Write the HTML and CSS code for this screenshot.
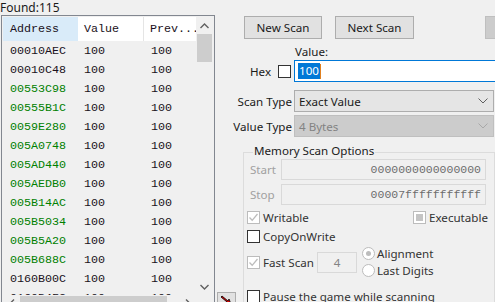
FILE: index.html
```html
<!DOCTYPE html>
<html>
<head>
<meta charset="utf-8">
<title>Cheat Engine</title>
<link rel="stylesheet" href="styles.css">
</head>
<body>
<div class="app">
  <div class="left">
    <div class="found">Found:115</div>
    <div class="list">
      <div class="table">
        <div class="hdr">
          <div class="c1 hot">Address</div>
          <div class="c2">Value</div>
          <div class="c3">Prev...</div>
        </div>
        <div class="row"><span class="c1">00010AEC</span><span class="c2">100</span><span class="c3">100</span></div>
        <div class="row"><span class="c1">00010C48</span><span class="c2">100</span><span class="c3">100</span></div>
        <div class="row"><span class="c1 g">00553C98</span><span class="c2">100</span><span class="c3">100</span></div>
        <div class="row"><span class="c1 g">00555B1C</span><span class="c2">100</span><span class="c3">100</span></div>
        <div class="row"><span class="c1 g">0059E280</span><span class="c2">100</span><span class="c3">100</span></div>
        <div class="row"><span class="c1 g">005A0748</span><span class="c2">100</span><span class="c3">100</span></div>
        <div class="row"><span class="c1 g">005AD440</span><span class="c2">100</span><span class="c3">100</span></div>
        <div class="row"><span class="c1 g">005AEDB0</span><span class="c2">100</span><span class="c3">100</span></div>
        <div class="row"><span class="c1 g">005B14AC</span><span class="c2">100</span><span class="c3">100</span></div>
        <div class="row"><span class="c1 g">005B5034</span><span class="c2">100</span><span class="c3">100</span></div>
        <div class="row"><span class="c1 g">005B5A20</span><span class="c2">100</span><span class="c3">100</span></div>
        <div class="row"><span class="c1 g">005B688C</span><span class="c2">100</span><span class="c3">100</span></div>
        <div class="row"><span class="c1">0160B00C</span><span class="c2">100</span><span class="c3">100</span></div>
        <div class="row"><span class="c1">0160B4FC</span><span class="c2">100</span><span class="c3">100</span></div>
      </div>
      <div class="vscroll">
        <div class="sarr"><svg width="9" height="6" viewBox="0 0 9 6"><path d="M0.5 5 L4.5 1 L8.5 5" fill="none" stroke="#606060" stroke-width="1.4"/></svg></div>
        <div class="vthumb"></div>
        <div class="vtrack"></div>
        <div class="sarr"><svg width="9" height="6" viewBox="0 0 9 6"><path d="M0.5 1 L4.5 5 L8.5 1" fill="none" stroke="#606060" stroke-width="1.4"/></svg></div>
      </div>
      <div class="hscroll">
        <div class="harr"><svg width="6" height="9" viewBox="0 0 6 9"><path d="M5 0.5 L1 4.5 L5 8.5" fill="none" stroke="#606060" stroke-width="1.4"/></svg></div>
        <div class="hthumb"></div>
        <div class="htrack"></div>
        <div class="harr"><svg width="6" height="9" viewBox="0 0 6 9"><path d="M1 0.5 L5 4.5 L1 8.5" fill="none" stroke="#606060" stroke-width="1.4"/></svg></div>
      </div>
      <div class="corner"></div>
    </div>
  </div>

  <div class="right">
    <div class="btnrow">
      <div class="btn">New Scan</div>
      <div class="btn next">Next Scan</div>
      <div class="btn off"></div>
    </div>
    <div class="vlabel">Value:</div>
    <div class="hexrow">
      <span class="hex">Hex</span>
      <span class="cb"></span>
      <div class="valinput"><span class="sel">100</span><span class="caret"></span></div>
    </div>
    <div class="selrow">
      <span class="lbl">Scan Type</span>
      <div class="combo">Exact Value<svg class="chev" width="10" height="6" viewBox="0 0 10 6"><path d="M0.5 0.5 L5 5 L9.5 0.5" fill="none" stroke="#606060" stroke-width="1"/></svg></div>
    </div>
    <div class="selrow vt">
      <span class="lbl">Value Type</span>
      <div class="combo dis">4 Bytes<svg class="chev" width="10" height="6" viewBox="0 0 10 6"><path d="M0.5 0.5 L5 5 L9.5 0.5" fill="none" stroke="#a8a8a8" stroke-width="1"/></svg></div>
    </div>
    <div class="lower">
      <div class="gutter">
        <div class="arrowbtn"><svg width="14" height="10" viewBox="0 0 14 10"><path d="M2 1 L8 6 L9 4 L11 9 L5 8 L7 7 L1 2 Z" fill="#e00000" stroke="#000" stroke-width="0.8"/></svg></div>
      </div>
      <div class="group">
        <div class="legend">Memory Scan Options</div>
        <div class="rangerow"><span class="rl">Start</span><div class="rin">0000000000000000</div></div>
        <div class="rangerow stop"><span class="rl">Stop</span><div class="rin">00007fffffffffff</div></div>
        <div class="chkrow first">
          <div class="chk w"><span class="cb dis"><svg width="11" height="11" viewBox="0 0 11 11"><path d="M1.5 5.5 L4.2 8.3 L9.5 2" fill="none" stroke="#bcbcbc" stroke-width="1.3"/></svg></span><span class="t">Writable</span></div>
          <div class="chk"><span class="cb dis ind"><span class="sq"></span></span><span class="t">Executable</span></div>
        </div>
        <div class="chkrow">
          <div class="chk"><span class="cb"></span><span class="t">CopyOnWrite</span></div>
        </div>
        <div class="fastrow">
          <div class="chk fs"><span class="cb dis"><svg width="11" height="11" viewBox="0 0 11 11"><path d="M1.5 5.5 L4.2 8.3 L9.5 2" fill="none" stroke="#bcbcbc" stroke-width="1.3"/></svg></span><span class="t">Fast Scan</span></div>
          <div class="fastin">4</div>
          <div class="radios">
            <div class="rad"><span class="rb on"><span class="dot"></span></span><span class="t">Alignment</span></div>
            <div class="rad"><span class="rb"></span><span class="t">Last Digits</span></div>
          </div>
        </div>
        <div class="chkrow pause">
          <div class="chk"><span class="cb"></span><span class="t">Pause the game while scanning</span></div>
        </div>
      </div>
    </div>
  </div>
</div>
</body>
</html>
```

FILE: styles.css
```css
html, body {
  margin: 0;
  padding: 0;
  background: #f0f0f0;
  overflow: hidden;
}
body {
  width: 495px;
  height: 302px;
  font-family: "Noto Sans", "Open Sans", sans-serif;
  font-size: 11.6px;
  color: #1a1a1a;
}
.app {
  display: flex;
  width: 495px;
  height: 302px;
  overflow: hidden;
}
.left {
  width: 215px;
  flex: none;
}
.found {
  height: 15px;
  line-height: 15px;
  font-size: 12px;
  white-space: nowrap;
}
.list {
  margin-left: 1px;
  width: 214px;
  height: 299px;
  box-sizing: border-box;
  border: 1px solid #828790;
  padding: 1px;
  display: grid;
  grid-template-columns: 193px 17px;
  grid-template-rows: 1fr 17px;
  background: #f0f0f0;
}
.table {
  overflow: hidden;
  font-family: "Liberation Mono", "DejaVu Sans Mono", monospace;
  font-size: 11.7px;
  color: #1a1020;
}
.hdr {
  display: flex;
  height: 24px;
  background: #fff;
  align-items: stretch;
}
.hdr > div {
  display: flex;
  align-items: center;
  box-sizing: border-box;
}
.hdr .c2 { border-right: 1px solid #e5e5e5; }
.hot { background: #d9ebf9; }
.c1 { width: 75px; padding-left: 7px; box-sizing: border-box; flex: none; }
.c2 { width: 66px; padding-left: 6px; box-sizing: border-box; flex: none; }
.c3 { padding-left: 7px; flex: none; white-space: nowrap; }
.hdr .c3 { padding-left: 6px; }
.row {
  display: flex;
  height: 19px;
  align-items: center;
  white-space: nowrap;
}
.g { color: #008000; }

.vscroll {
  display: flex;
  flex-direction: column;
  background: #f0f0f0;
}
.sarr {
  height: 17px;
  display: flex;
  align-items: center;
  justify-content: center;
  flex: none;
}
.vthumb {
  height: 28px;
  margin: 0 1px;
  background: #cdcdcd;
  flex: none;
}
.vtrack { flex: 1; }
.hscroll {
  display: flex;
  background: #f0f0f0;
}
.harr {
  width: 17px;
  display: flex;
  align-items: center;
  justify-content: center;
  flex: none;
}
.hthumb {
  width: 147px;
  margin: 1px 0;
  background: #cdcdcd;
  flex: none;
}
.htrack { flex: 1; }
.corner { background: #f0f0f0; }

.right {
  width: 280px;
  flex: none;
  overflow: hidden;
}
.btnrow {
  display: flex;
  margin-top: 16px;
  padding-left: 29px;
  height: 23px;
}
.btn {
  box-sizing: border-box;
  width: 78px;
  height: 23px;
  border: 1px solid #adadad;
  background: #e1e1e1;
  display: flex;
  align-items: center;
  justify-content: center;
  flex: none;
}
.btn.next { margin-left: 13px; width: 79px; }
.btn.off {
  margin-left: 71px;
  width: 40px;
  background: #cccccc;
  border-color: #bfbfbf;
}
.vlabel {
  margin-top: 5px;
  height: 16px;
  line-height: 16px;
  padding-left: 80px;
}
.hexrow {
  display: flex;
  align-items: center;
  height: 22px;
}
.hex {
  padding-left: 35px;
  width: 28px;
  flex: none;
}
.cb {
  box-sizing: border-box;
  width: 13px;
  height: 13px;
  border: 1px solid #333;
  background: #fff;
  display: inline-flex;
  align-items: center;
  justify-content: center;
  flex: none;
}
.valinput {
  box-sizing: border-box;
  margin-left: 3px;
  width: 210px;
  height: 22px;
  border: 1px solid #0078d7;
  background: #fff;
  display: flex;
  align-items: center;
  padding-left: 3px;
  flex: none;
}
.sel {
  background: #0078d7;
  color: #fff;
  line-height: 16px;
  padding: 0 1px;
}
.caret {
  width: 1px;
  height: 15px;
  background: #e08020;
}
.selrow {
  display: flex;
  align-items: center;
  margin-top: 8px;
  height: 22px;
}
.selrow.vt { margin-top: 3px; }
.lbl {
  width: 77px;
  text-align: right;
  padding-right: 2px;
  white-space: nowrap;
  flex: none;
}
.combo {
  box-sizing: border-box;
  width: 200px;
  height: 22px;
  border: 1px solid #adadad;
  background: #e5e5e5;
  display: flex;
  align-items: center;
  padding-left: 4px;
  padding-right: 5px;
  flex: none;
}
.combo .chev { margin-left: auto; }
.combo.dis {
  background: #cccccc;
  border-color: #bfbfbf;
  color: #838383;
}
.lower {
  display: flex;
  margin-top: 6px;
}
.gutter {
  width: 28px;
  flex: none;
}
.arrowbtn {
  box-sizing: border-box;
  margin-top: 149px;
  margin-left: 2px;
  width: 19px;
  height: 19px;
  border: 1px solid #adadad;
  background: #e1e1e1;
  display: flex;
  justify-content: center;
  padding-top: 2px;
}
.group {
  box-sizing: border-box;
  width: 252px;
  height: 200px;
  margin-top: 9px;
  border: 1px solid #dcdcdc;
  flex: none;
}
.legend {
  margin: -10px 0 0 9px;
  padding: 0 1px;
  width: fit-content;
  background: #f0f0f0;
  line-height: 16px;
  height: 16px;
  white-space: nowrap;
}
.rangerow {
  display: flex;
  align-items: center;
  height: 21px;
  color: #a0a0a0;
}
.rangerow.stop { margin-top: 4px; }
.rl {
  width: 31px;
  padding-left: 6px;
  flex: none;
}
.rin {
  box-sizing: border-box;
  width: 205px;
  height: 21px;
  border: 1px solid #d9d9d9;
  display: flex;
  align-items: center;
  justify-content: flex-end;
  padding-right: 4px;
  color: #6d6d6d;
  font-family: "Liberation Mono", "DejaVu Sans Mono", monospace;
  font-size: 11.5px;
  flex: none;
}
.chkrow {
  display: flex;
  align-items: center;
  height: 17px;
  margin-top: 2px;
  padding-left: 3px;
}
.chkrow.first { margin-top: 4px; }
.chkrow.pause { margin-top: 9px; }
.chk {
  display: flex;
  align-items: center;
  color: #333;
  white-space: nowrap;
}
.chk .t { margin-left: 3px; }
.chk.w { width: 166px; flex: none; }
.cb.dis { border-color: #bcbcbc; }
.cb.ind .sq {
  width: 7px;
  height: 7px;
  background: #c4c4c4;
}
.fastrow {
  display: flex;
  align-items: center;
  height: 34px;
  padding-left: 3px;
}
.chk.fs { width: 70px; flex: none; }
.fastin {
  box-sizing: border-box;
  width: 40px;
  height: 21px;
  border: 1px solid #d9d9d9;
  display: flex;
  align-items: center;
  justify-content: center;
  color: #838383;
  flex: none;
}
.radios {
  margin-left: 5px;
  display: flex;
  flex-direction: column;
}
.rad {
  display: flex;
  align-items: center;
  height: 17px;
  color: #333;
  white-space: nowrap;
}
.rad .t { margin-left: 2px; }
.rb {
  box-sizing: border-box;
  width: 13px;
  height: 13px;
  border: 1px solid #bcbcbc;
  border-radius: 50%;
  background: #fff;
  display: inline-flex;
  align-items: center;
  justify-content: center;
}
.rb .dot {
  width: 5px;
  height: 5px;
  border-radius: 50%;
  background: #bcbcbc;
}
```
